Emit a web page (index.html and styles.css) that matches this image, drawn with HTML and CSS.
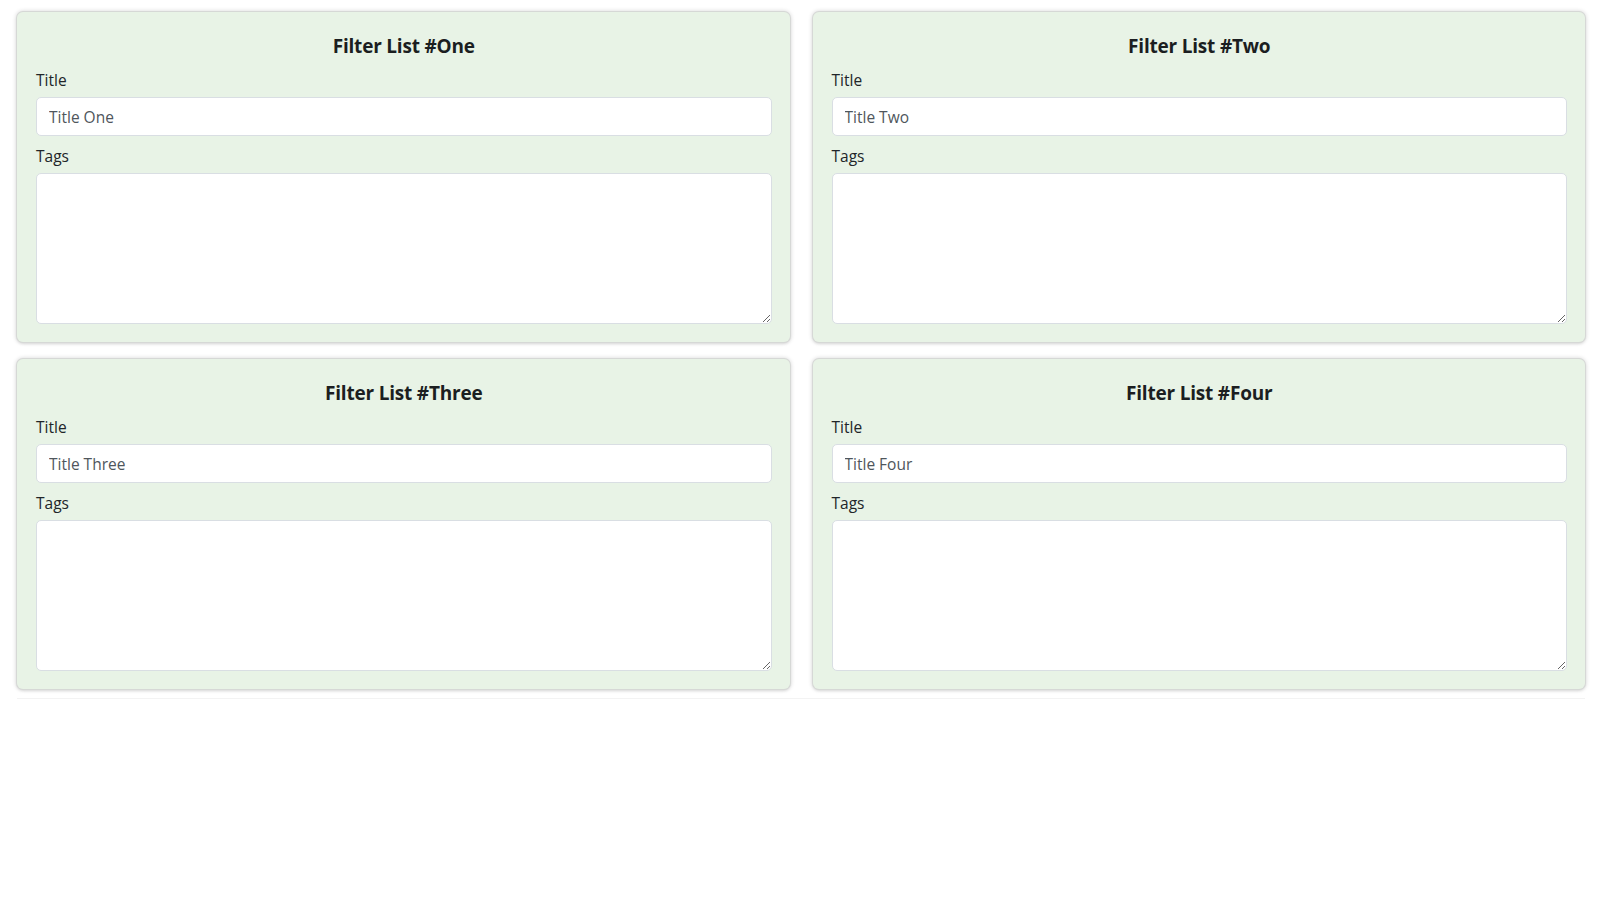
FILE: index.html
```html
<!DOCTYPE html>
<html lang="en">
<head>
<meta charset="utf-8">
<title>Filter Lists</title>
<link rel="stylesheet" href="styles.css">
</head>
<body>
<div class="wrap">
  <div class="grid">
    <section class="card">
      <h2 class="card-title">Filter List #One</h2>
      <label class="lbl">Title</label>
      <input class="field" type="text" value="Title One">
      <label class="lbl">Tags</label>
      <textarea class="area"></textarea>
    </section>
    <section class="card">
      <h2 class="card-title">Filter List #Two</h2>
      <label class="lbl">Title</label>
      <input class="field" type="text" value="Title Two">
      <label class="lbl">Tags</label>
      <textarea class="area"></textarea>
    </section>
    <section class="card">
      <h2 class="card-title">Filter List #Three</h2>
      <label class="lbl">Title</label>
      <input class="field" type="text" value="Title Three">
      <label class="lbl">Tags</label>
      <textarea class="area"></textarea>
    </section>
    <section class="card">
      <h2 class="card-title">Filter List #Four</h2>
      <label class="lbl">Title</label>
      <input class="field" type="text" value="Title Four">
      <label class="lbl">Tags</label>
      <textarea class="area"></textarea>
    </section>
  </div>
</div>
</body>
</html>
```

FILE: styles.css
```css
html, body {
  margin: 0;
  padding: 0;
  background: #ffffff;
  font-family: "Open Sans", "Noto Sans", "Liberation Sans", sans-serif;
  color: #212529;
}

.wrap {
  margin: 0 15px 0 17px;
  padding-top: 12px;
  padding-bottom: 9px;
  border-bottom: 1px solid #f3f3f3;
}

.grid {
  display: grid;
  grid-template-columns: 1fr 1fr;
  column-gap: 23px;
  row-gap: 17px;
}

.card {
  display: flex;
  flex-direction: column;
  background: #e8f3e6;
  border-radius: 6px;
  box-shadow: 0 0 0 1px #d6d8d6, 0 0 4px 1px rgba(0, 0, 0, 0.16), 0 2px 3px rgba(0, 0, 0, 0.08);
  padding: 18px 18px 18px 19px;
  height: 330px;
  box-sizing: border-box;
}

.card-title {
  margin: 4px 0 12px;
  text-align: center;
  font-size: 19px;
  font-weight: 700;
  line-height: 24px;
  color: #1b1e21;
  letter-spacing: -0.2px;
}

.lbl {
  font-size: 15.5px;
  line-height: 20px;
  color: #212529;
  margin-bottom: 7px;
}

.field {
  display: block;
  height: 39px;
  box-sizing: border-box;
  border: 1px solid #d9dee3;
  border-radius: 5px;
  background: #fff;
  padding: 0 12px;
  font-family: inherit;
  font-size: 15.5px;
  color: #4f565c;
  margin: 0 0 10px;
  outline: none;
}

.area {
  display: block;
  height: 151px;
  box-sizing: border-box;
  border: 1px solid #d9dee3;
  border-radius: 5px;
  background: #fff;
  padding: 6px 12px;
  font-family: inherit;
  font-size: 15px;
  margin: 0;
  resize: vertical;
  outline: none;
}
```
